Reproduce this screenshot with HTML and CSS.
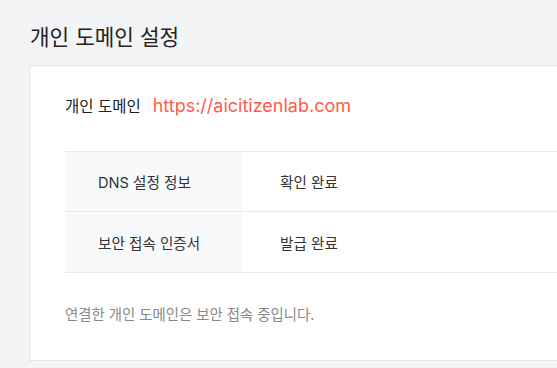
FILE: index.html
```html
<!DOCTYPE html>
<html lang="ko">
<head>
    <meta charset="UTF-8">
    <meta name="viewport" content="width=device-width, initial-scale=1.0">
    <title>개인 도메인 설정</title>
    <link rel="stylesheet" href="styles.css">
</head>
<body>
    <div class="page">
        <h1 class="page-title">개인 도메인 설정</h1>

        <div class="card">
            <div class="domain-row">
                <span class="domain-label">개인 도메인</span>
                <span class="domain-url">https://aicitizenlab.com</span>
            </div>

            <table class="status-table">
                <tr>
                    <th>DNS 설정 정보</th>
                    <td>확인 완료</td>
                </tr>
                <tr>
                    <th>보안 접속 인증서</th>
                    <td>발급 완료</td>
                </tr>
            </table>

            <p class="note">연결한 개인 도메인은 보안 접속 중입니다.</p>
        </div>
    </div>
</body>
</html>
```
FILE: styles.css
```css
html, body {
    margin: 0;
    padding: 0;
    overflow: hidden;
}

body {
    font-family: "Inter", "Noto Sans CJK KR", sans-serif;
    background: #f3f4f6;
    color: #222;
}

.page {
    width: 700px;
    padding: 0 0 0 29px;
}

.page-title {
    margin: 0 0 14px;
    padding: 23px 0 0 1px;
    font-size: 21.3px;
    font-weight: 400;
    line-height: 28px;
    color: #222;
}

.card {
    background: #fff;
    border: 1px solid #e1e4ea;
    padding: 28px 0 35px 35px;
}

.domain-row {
    display: flex;
    align-items: center;
    gap: 12px;
    height: 22px;
}

.domain-label {
    font-size: 15.5px;
    color: #222;
}

.domain-url {
    font-size: 18px;
    color: #ff5b4b;
}

.status-table {
    width: 100%;
    margin-top: 35px;
    border-collapse: collapse;
    font-size: 14.6px;
}

.status-table tr {
    border-top: 1px solid #e8e9ec;
    border-bottom: 1px solid #e8e9ec;
}

.status-table th,
.status-table td {
    height: 59px;
    padding: 0;
    text-align: left;
    font-weight: 400;
    color: #333;
}

.status-table tr + tr th,
.status-table tr + tr td {
    height: 60px;
}

.status-table th {
    width: 144px;
    padding-left: 33px;
    background: #f8f9fb;
}

.status-table td {
    padding-left: 38px;
}

.note {
    margin: 32px 0 0;
    font-size: 14.4px;
    line-height: 20px;
    color: #888;
}
```
